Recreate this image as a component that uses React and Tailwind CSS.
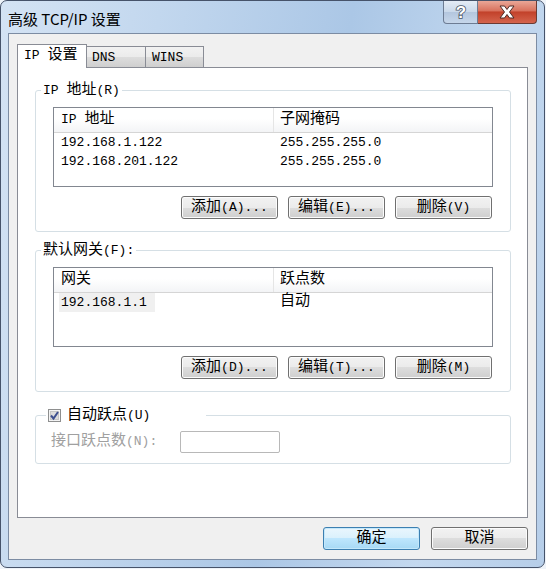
import React from 'react';

// CJK glyphs a little larger than the latin monospace, like SimSun on the dialog
const Z = ({ children }) => <span className="text-[15px]">{children}</span>;

function Btn({ children, primary }) {
    return (
        <button
            className={
                primary
                    ? 'w-[97px] h-[23px] rounded-[3px] border border-[#3c7fb1] bg-[linear-gradient(#eaf6fd,#d9f0fc_50%,#bee6fd_50%,#a7d9f5)] shadow-[inset_0_0_0_1px_#c4e8fb] flex items-center justify-center leading-none text-black'
                    : 'w-[97px] h-[23px] rounded-[3px] border border-[#707070] bg-[linear-gradient(#f2f2f2,#ebebeb_50%,#dddddd_50%,#cfcfcf)] shadow-[inset_0_0_0_1px_#fcfcfc] flex items-center justify-center leading-none text-black'
            }
        >
            {children}
        </button>
    );
}

function Group({ label, children, className }) {
    return (
        <div className={`relative ml-[17px] w-[476px] rounded-[3px] border border-[#d5dfe5] pt-[16px] pl-[17px] pr-[17px] pb-[12px] ${className}`}>
            <div className="absolute left-[5px] -top-[9px] px-[2px] bg-white leading-[17px]">
                {label}
            </div>
            {children}
        </div>
    );
}

function ListView({ cols, rows, selectFirst }) {
    return (
        <div className="h-[80px] border border-[#828790] bg-white">
            <div className="flex h-[25px] border-b border-[#d5d5d5] bg-[linear-gradient(#ffffff,#ffffff_45%,#f3f4f6)]">
                <div className="w-[220px] border-r border-[#e5e5e5] pl-[7px] leading-[24px]">{cols[0]}</div>
                <div className="flex-1 pl-[6px] leading-[24px]">{cols[1]}</div>
            </div>
            {rows.map((r, i) => (
                <div key={i} className="flex h-[19px] items-center">
                    {selectFirst && i === 0 ? (
                        <div className="w-[220px] pl-[5px]">
                            <span className="inline-flex items-center h-[19px] w-[96px] px-[2px] bg-[#f0f0f0]">{r[0]}</span>
                        </div>
                    ) : (
                        <div className="w-[220px] pl-[7px]">{r[0]}</div>
                    )}
                    <div className="flex-1 pl-[6px]">{r[1]}</div>
                </div>
            ))}
        </div>
    );
}

function ButtonRow({ children }) {
    return <div className="mt-[9px] flex justify-end gap-[10px] pr-[1px]">{children}</div>;
}

export default function App() {
    return (
        <div className="w-[546px] h-[569px] bg-[#eef3f9] font-['Liberation_Mono','Noto_Sans_CJK_SC',monospace] text-[13px] text-black">
            <div className="w-[545px] h-[568px] flex flex-col rounded-[7px] border border-[#46536a] bg-[linear-gradient(100deg,#d4e3f4,#c2d7ee_25%,#abc7e6_55%,#c3d8ef_80%,#b6cee9)] px-[7px] pb-[7px]">
                {/* title bar */}
                <div className="h-[32px] flex justify-between items-start">
                    <div className="pt-[9px] leading-[18px] text-[15px] font-['Noto_Sans_CJK_SC','Noto_Sans',sans-serif]">
                        高级 TCP/IP 设置
                    </div>
                    <div className="flex">
                        <div className="w-[35px] h-[23px] rounded-bl-[4px] border border-t-0 border-[#6d7c93] bg-[linear-gradient(#e4ecf6,#c9d8ea_50%,#b3c6de_50%,#c6d6ea)] flex items-center justify-center">
                            <svg width="14" height="18" viewBox="0 0 14 18">
                                <text x="7" y="15" textAnchor="middle" fontSize="17" fontWeight="bold" fontFamily="Liberation Sans, sans-serif" fill="#ffffff" stroke="#4a5566" strokeWidth="1.6" paintOrder="stroke">?</text>
                            </svg>
                        </div>
                        <div className="w-[59px] h-[23px] rounded-br-[4px] border border-t-0 border-l-0 border-[#6b3a33] bg-[linear-gradient(#e9a797,#d8715d_45%,#c2412a_50%,#d4644d)] flex items-center justify-center">
                            <svg width="18" height="14" viewBox="0 0 18 14">
                                <path d="M2 1 H6.5 L9 4.5 L11.5 1 H16 L11.5 7 L16 13 H11.5 L9 9.5 L6.5 13 H2 L6.5 7 Z" fill="#ffffff" stroke="#4b2b26" strokeWidth="1" strokeLinejoin="round" />
                            </svg>
                        </div>
                    </div>
                </div>

                {/* client area */}
                <div className="flex-1 flex flex-col border border-[#7c8ca3] bg-[#f0f0f0] pt-[10px] px-[8px] pb-[8px]">
                    <div className="flex items-end h-[24px] -mb-px relative z-10">
                        <div className="w-[70px] h-[24px] border border-b-0 border-[#898c95] bg-white pl-[6px] leading-[22px]">
                            IP&nbsp;<Z>设置</Z>
                        </div>
                        <div className="w-[60px] h-[22px] -ml-px border border-[#898c95] bg-[linear-gradient(#f2f2f2,#ebebeb_50%,#dddddd_50%,#cfcfcf)] pl-[5px] leading-[21px]">
                            DNS
                        </div>
                        <div className="w-[59px] h-[22px] -ml-px border border-[#898c95] bg-[linear-gradient(#f2f2f2,#ebebeb_50%,#dddddd_50%,#cfcfcf)] pl-[6px] leading-[21px]">
                            WINS
                        </div>
                    </div>

                    <div className="h-[451px] border border-[#898c95] bg-white pt-[22px]">
                        <Group label={<>IP&nbsp;<Z>地址</Z>(R)</>}>
                            <ListView
                                cols={[<>IP&nbsp;<Z>地址</Z></>, <Z>子网掩码</Z>]}
                                rows={[
                                    ['192.168.1.122', '255.255.255.0'],
                                    ['192.168.201.122', '255.255.255.0'],
                                ]}
                            />
                            <ButtonRow>
                                <Btn><Z>添加</Z>(A)...</Btn>
                                <Btn><Z>编辑</Z>(E)...</Btn>
                                <Btn><Z>删除</Z>(V)</Btn>
                            </ButtonRow>
                        </Group>

                        <Group className="mt-[18px]" label={<><Z>默认网关</Z>(F):</>}>
                            <ListView
                                cols={[<Z>网关</Z>, <Z>跃点数</Z>]}
                                rows={[['192.168.1.1', <Z>自动</Z>]]}
                                selectFirst
                            />
                            <ButtonRow>
                                <Btn><Z>添加</Z>(D)...</Btn>
                                <Btn><Z>编辑</Z>(T)...</Btn>
                                <Btn><Z>删除</Z>(M)</Btn>
                            </ButtonRow>
                        </Group>

                        <div className="relative mt-[23px] ml-[17px] w-[476px] rounded-[3px] border border-[#d5dfe5] pt-[15px] pl-[15px] pb-[9px]">
                            <div className="absolute left-[10px] -top-[8px] w-[160px] h-[15px] bg-white pl-[2px] flex items-center">
                                <svg width="13" height="13" viewBox="0 0 13 13">
                                    <rect x="0.5" y="0.5" width="12" height="12" fill="#f4f4f4" stroke="#8e8f8f" />
                                    <rect x="2.5" y="2.5" width="8" height="8" fill="#dcdcdc" stroke="#c5c5c5" />
                                    <path d="M3 6.5 L5.5 9.5 L10 3" fill="none" stroke="#3d4f8f" strokeWidth="2" />
                                </svg>
                                <span className="ml-[6px] leading-[15px]"><Z>自动跃点</Z>(U)</span>
                            </div>
                            <div className="flex items-center text-[#a0a0a0]">
                                <div className="w-[129px]"><Z>接口跃点数</Z>(N):</div>
                                <div className="w-[100px] h-[22px] rounded-[2px] border border-[#b8b8b8] bg-white" />
                            </div>
                        </div>
                    </div>

                    <div className="mt-[9px] flex justify-end gap-[11px]">
                        <Btn primary><Z>确定</Z></Btn>
                        <Btn><Z>取消</Z></Btn>
                    </div>
                </div>
            </div>
        </div>
    );
}
